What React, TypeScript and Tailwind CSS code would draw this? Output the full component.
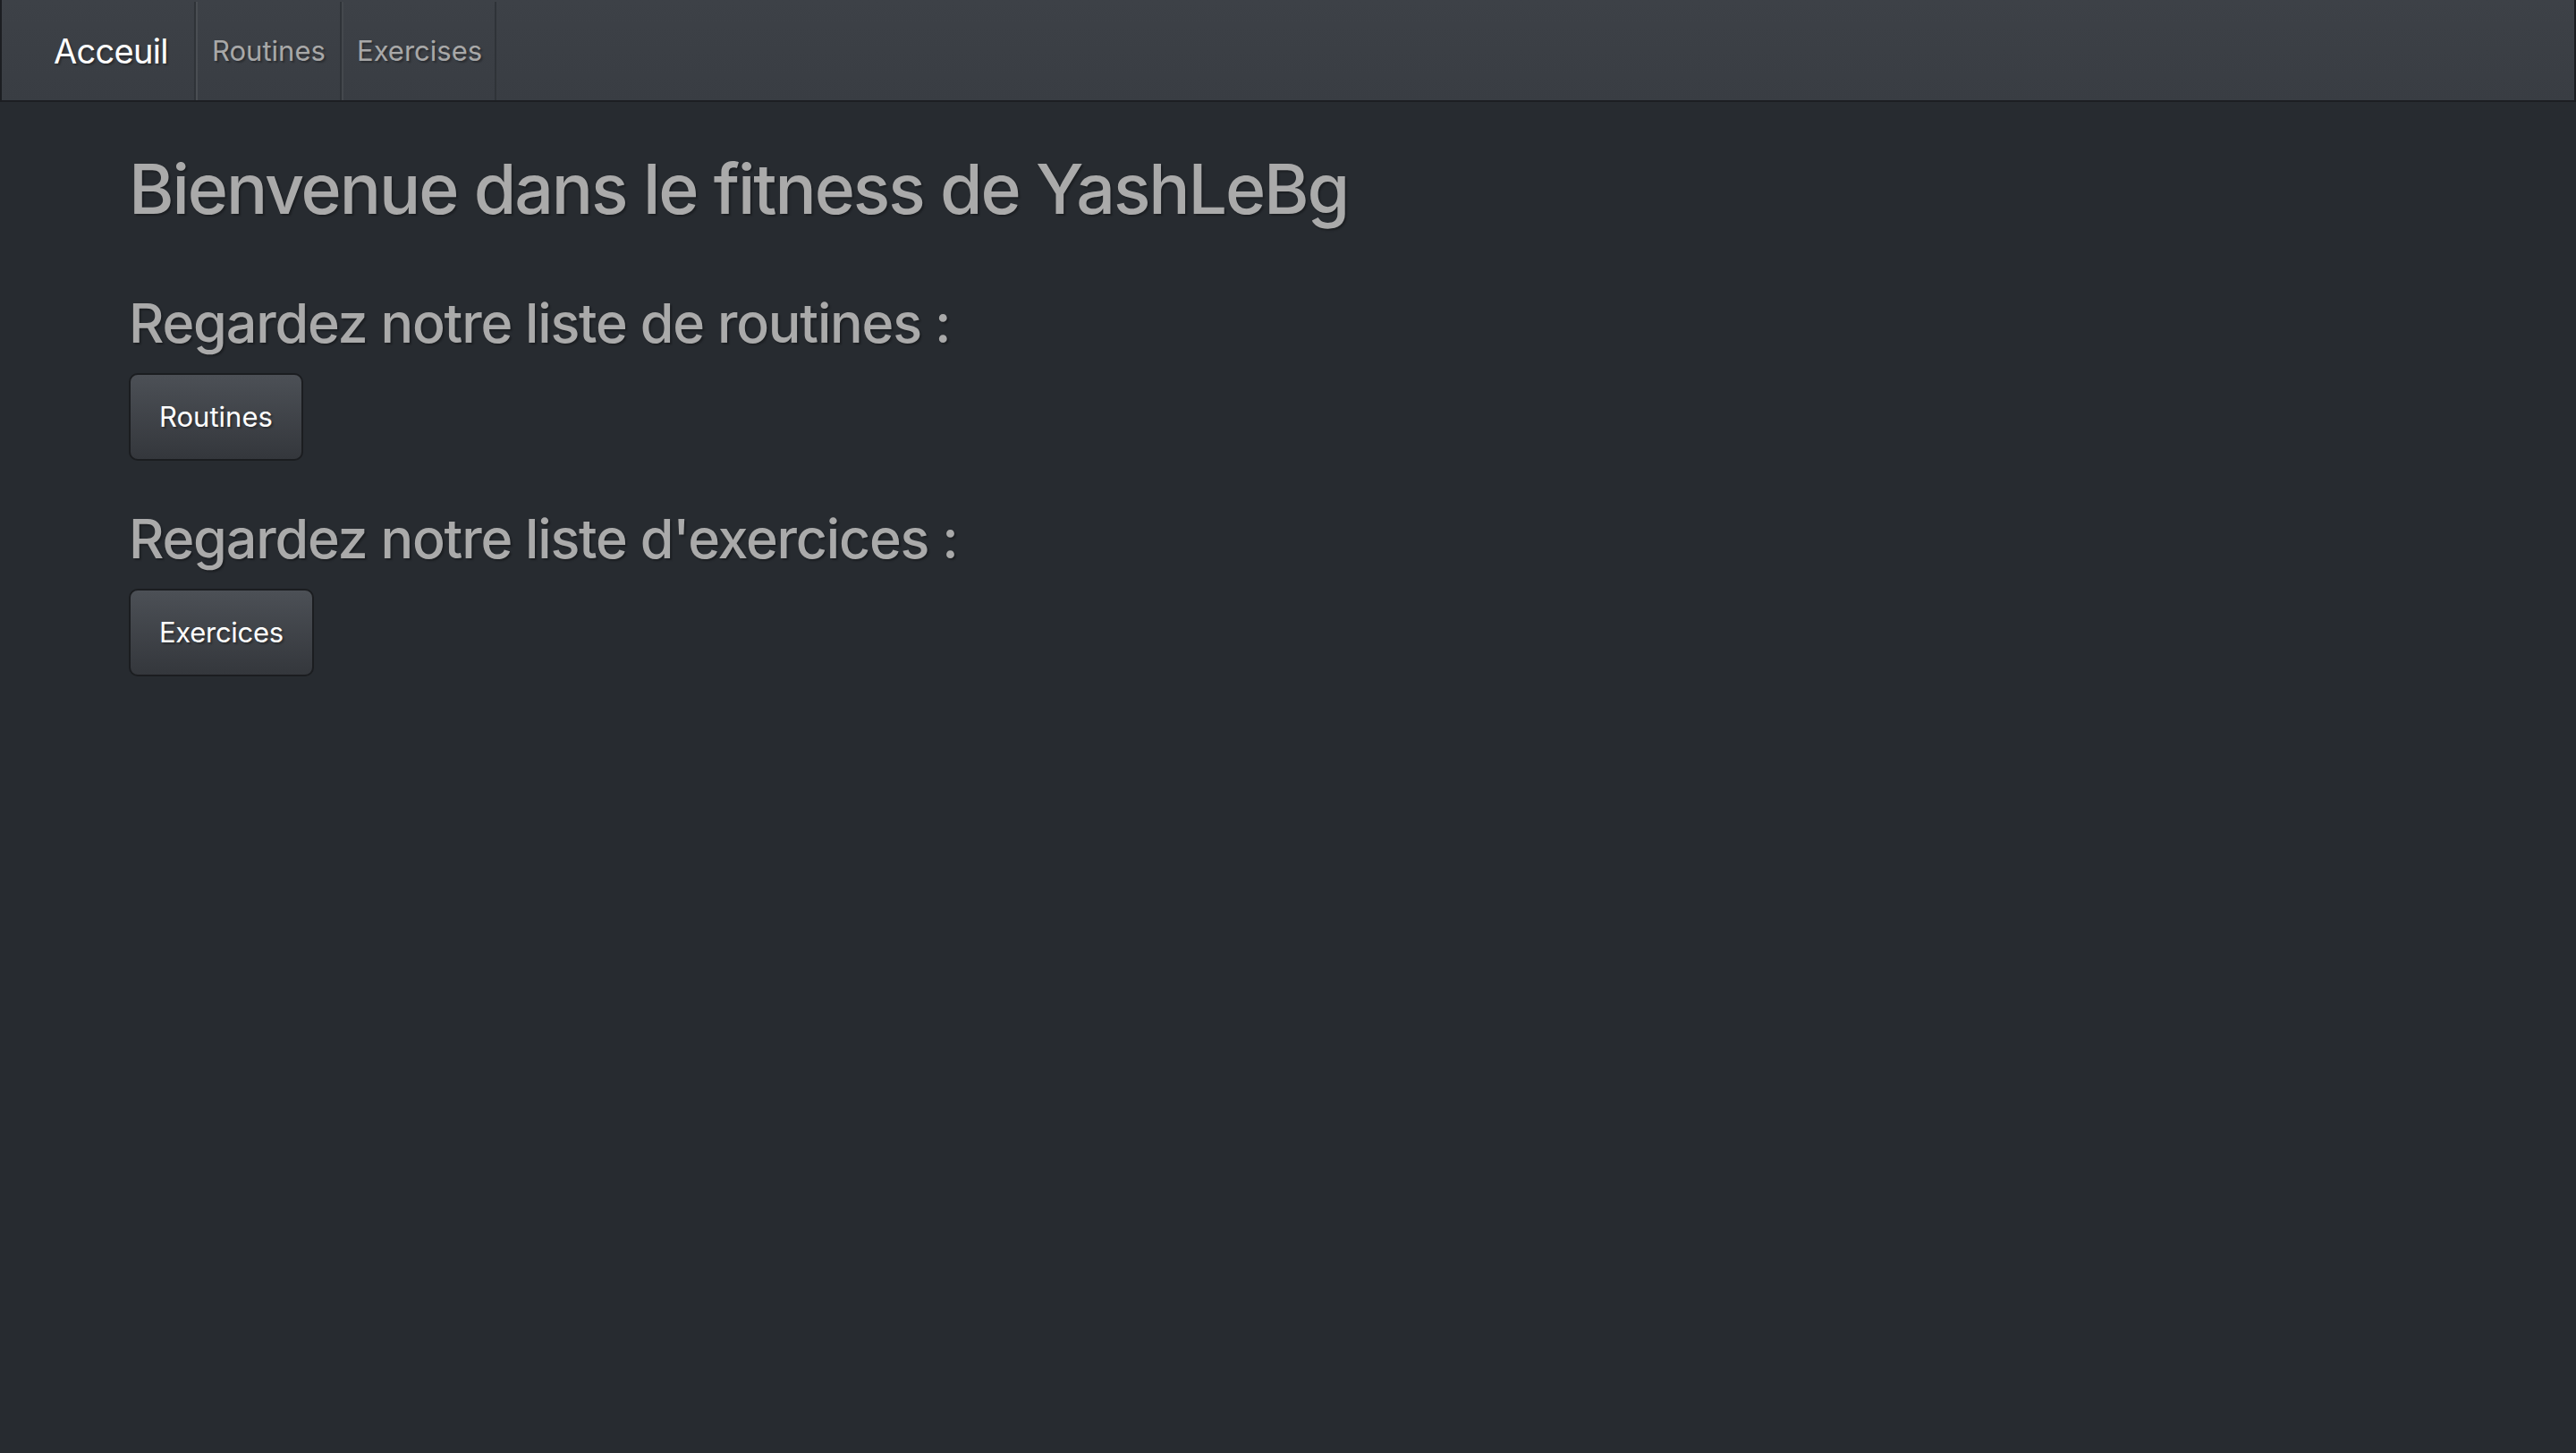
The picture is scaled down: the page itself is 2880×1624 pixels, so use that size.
export default function App() {
  const shadow = '[text-shadow:2px_2px_2px_rgba(0,0,0,0.3)]';

  return (
    <div className="min-h-screen w-full bg-[#272b30] font-['Inter','Noto_Sans',sans-serif]">
      <nav className="flex h-[114px] items-stretch border-x-2 border-b-2 border-[#1c1e22] bg-gradient-to-b from-[#3d4147] to-[#393d43] pt-[2px]">
        <a
          href="#"
          className={`flex w-[217px] items-center border-r-2 border-[#2f3338] pl-[58px] text-[38px] tracking-[-0.7px] text-white ${shadow}`}
        >
          Acceuil
        </a>
        <a
          href="#"
          className={`flex w-[163px] items-center border-l-2 border-r-2 border-l-[#4a4e53] border-r-[#2f3338] pl-[16px] text-[31px] text-[#a8a8a8] ${shadow}`}
        >
          Routines
        </a>
        <a
          href="#"
          className={`flex w-[173px] items-center border-l-2 border-r-2 border-l-[#44484d] border-r-[#2f3338] pl-[15px] text-[31px] text-[#a8a8a8] ${shadow}`}
        >
          Exercises
        </a>
      </nav>

      <main className="pl-[144px]">
        <h1 className={`mt-[49px] text-[77px] font-medium leading-[96px] tracking-[-2.1px] text-[#aaaaaa] ${shadow}`}>
          Bienvenue dans le fitness de YashLeBg
        </h1>

        <h2 className={`mt-[64px] text-[61px] font-medium leading-[77px] tracking-[-1.2px] text-[#aaaaaa] ${shadow}`}>
          Regardez notre liste de routines :
        </h2>
        <button
          className={`mt-[17px] flex h-[98px] items-center rounded-[10px] border-2 border-[#1b1d20] bg-gradient-to-b from-[#4c5056] to-[#34373c] px-[32px] text-[31px] text-white ${shadow}`}
        >
          Routines
        </button>

        <h2 className={`mt-[49px] text-[61px] font-medium leading-[77px] tracking-[-1.2px] text-[#aaaaaa] ${shadow}`}>
          Regardez notre liste d'exercices :
        </h2>
        <button
          className={`mt-[17px] flex h-[98px] items-center rounded-[10px] border-2 border-[#1b1d20] bg-gradient-to-b from-[#4c5056] to-[#34373c] px-[32px] text-[31px] tracking-[-0.3px] text-white ${shadow}`}
        >
          Exercices
        </button>
      </main>
    </div>
  );
}
